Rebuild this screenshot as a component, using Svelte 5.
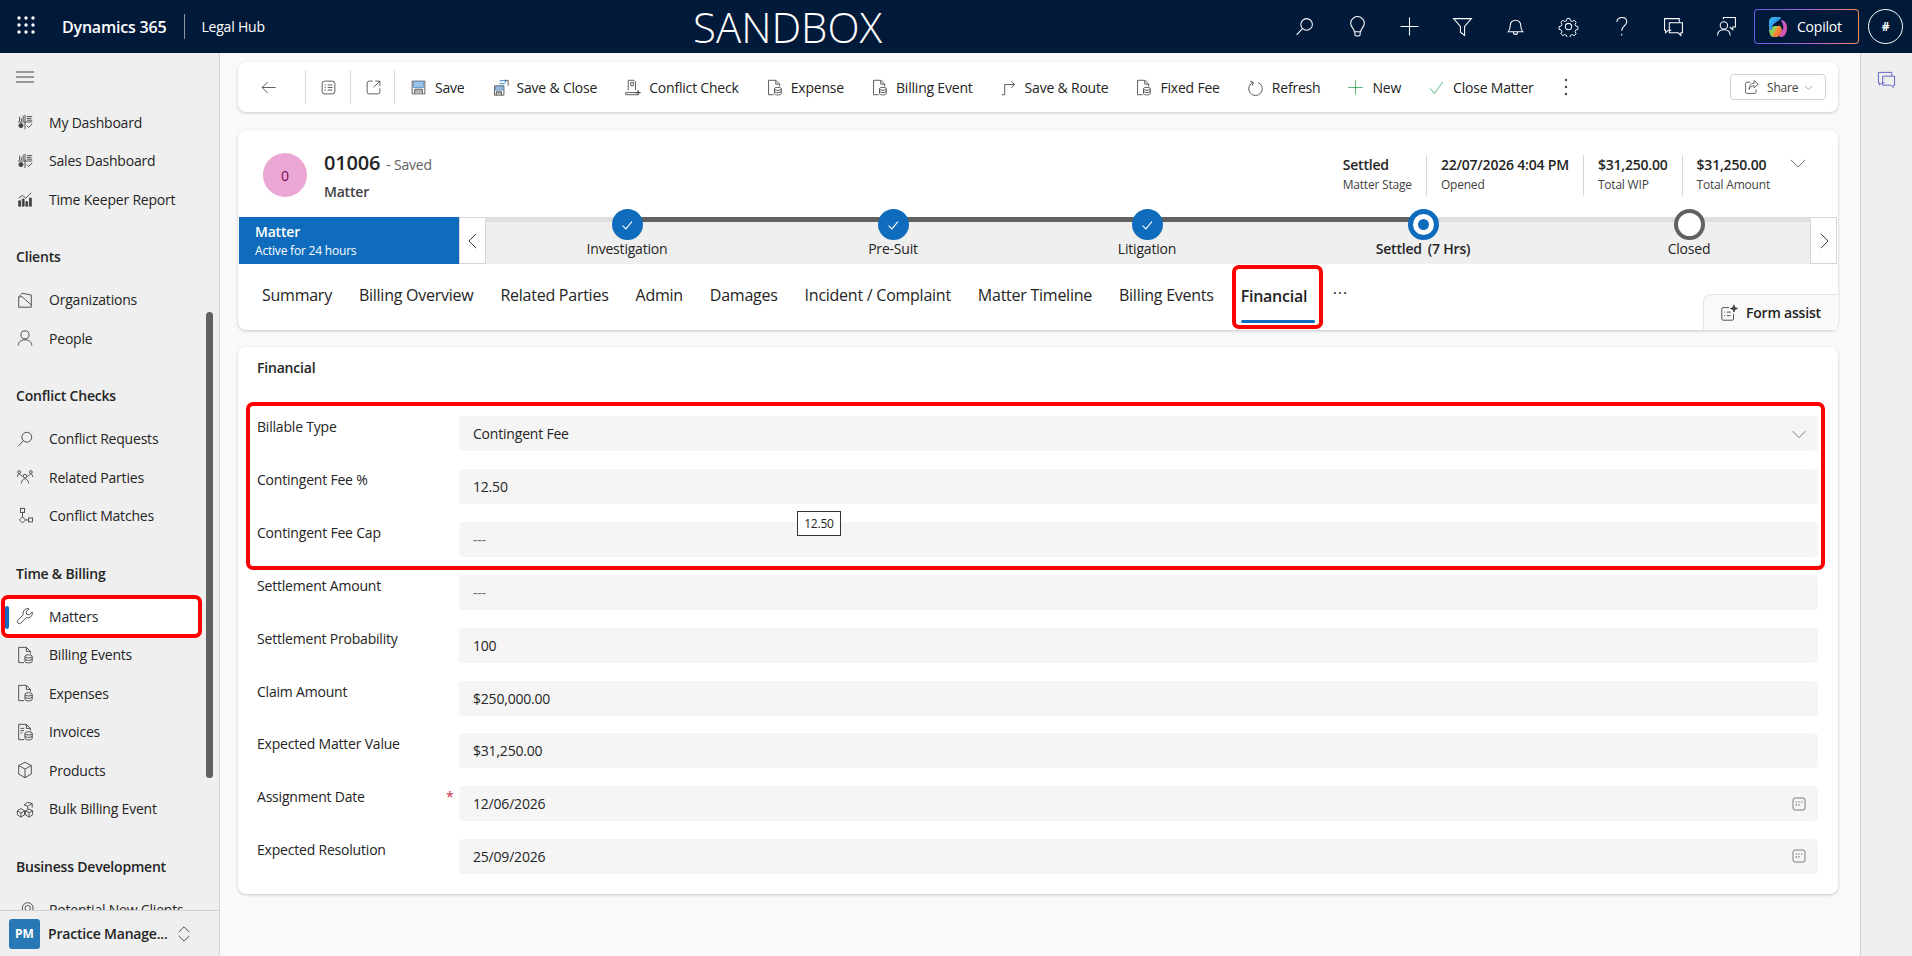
<script>
  const db = '<ellipse cx="14" cy="11.5" rx="4" ry="1.8"/><path d="M10 11.5v5.5c0 1 1.8 1.8 4 1.8s4-.8 4-1.8v-5.5M10 14.2c0 1 1.8 1.8 4 1.8s4-.8 4-1.8"/>';
  const icons = {
    dash: '<path d="M10 2v16M2 10h16M4 4v5M6 6v3M8 3v6M12 4h6M12 6h5M12 8h6M12 14l2 2 4-4"/><circle cx="5.5" cy="14" r="2.3" fill="currentColor"/>',
    report: '<path d="M3 18v-6h2v6zM7 18v-8h2v8zM11 18v-5h2v5zM15 18V9h2v9z" fill="currentColor"/><path d="M3 9l4-3 4 3 6-6"/>',
    org: '<path d="M3 6.5V18h14V4.5L7 2.5 3 6.5zM3 6.5h4l10 9"/>',
    person: '<circle cx="10" cy="6.5" r="4.5"/><path d="M2.5 18.5c0-4 3-6.5 7.5-6.5s7.5 2.5 7.5 6.5"/>',
    search: '<circle cx="12" cy="8" r="5.5"/><path d="M8 12l-5.5 6"/>',
    network: '<circle cx="10" cy="9" r="2"/><circle cx="3.5" cy="4.5" r="1.6"/><circle cx="16.5" cy="4.5" r="1.6"/><path d="M1.5 10c0-2 1-3.5 2-3.5l4 3M18.5 10c0-2-1-3.5-2-3.5l-4 3M6 17c0-3 2-5 4-5s4 2 4 5"/>',
    flow: '<rect x="5" y="1.5" width="4.5" height="4.5"/><path d="M7.2 6v5M7.2 11l3.4 3.4-3.4 3.4-3.4-3.4zM10.6 14.4H14"/><rect x="14" y="12.2" width="4.3" height="4.3"/>',
    wrench: '<path d="M18 5.5l-3.2 3.2-3-.6-.6-3L14.500 1.900a5.200 5.200 0 0 0-6.400 6.700L2.200 14.500a2.300 2.300 0 0 0 3.300 3.300l5.900-5.900a5.200 5.200 0 0 0 6.600-6.400z"/>',
    bill: '<path d="M9 18.500H3V1.500h8.500L16 6v2.500M11.500 1.500V6H16"/>' + db,
    invoice: '<path d="M9 18.500H3V1.500h8.500L16 6v2.500M11.500 1.500V6H16M5 6h4M5 8.500h4M5 11h2"/>' + db,
    cube: '<path d="M10 1.500l7 3.500v9.500l-7 4-7-4V5zM3 5l7 4 7-4M10 9v9.500"/>',
    cubes: '<path d="M9 5.500l4-3 5 1.500v4.500M9 5.500l4 1.500 5-3M13 7v3"/><path d="M1.500 12l4-2.500 4 2.500v4.500l-4 2.500-4-2.500zM1.500 12l4 2.500 4-2.500M5.500 14.500v4.500"/><path d="M10.500 12l4-2 4 2v4.500l-4 2.500-4-2.500zM14.500 14v5M10.500 12l4 2 4-2"/>',
    gearish: '<circle cx="13" cy="9" r="3"/><circle cx="13" cy="9" r="6"/><circle cx="4" cy="14" r="2.500"/>',
    back: '<path d="M18.500 10H2.500M9 3.500L2.500 10 9 16.500"/>',
    list: '<rect x="2.500" y="2.500" width="15" height="15" rx="3"/><path d="M9 7h5.500M9 10h5.500M9 13h5.500"/><path d="M5.500 7h1M5.500 10h1M5.500 13h1" stroke-width="1.500"/>',
    open: '<path d="M9 2.500H5A2.500 2.500 0 0 0 2.500 5v10A2.500 2.500 0 0 0 5 17.500h10a2.500 2.500 0 0 0 2.500-2.500v-4M12 2.500h5.500V8M17.500 2.500l-7.500 7.500"/>',
    save: '<path d="M2.500 2.500h15v15h-15z"/><path d="M4 3h12v7H4z" fill="#9cc3e6" stroke="#5b8fc0"/><path d="M5.500 17v-5h9v5" fill="#b5b5b5"/>',
    saveclose: '<path d="M3 8h11v11H3z"/><path d="M4 9h9v4H4z" fill="#9cc3e6" stroke="#5b8fc0"/><path d="M5 19v-4h6v4" fill="#b5b5b5"/><path d="M9 2h7v2M9 5.500h6M15 1l1.500 1.500L15 4" stroke="#1b6ec2"/><path d="M16 1.500h3V8" />',
    conflict: '<path d="M5 13V1.500h6.500l2 2V13M8 4h3v4H8zM2 16h12M2 16v2.500h14"/><path d="M16.500 13v6M13.500 16h6" stroke-width="1.300"/>',
    route: '<path d="M2 18.500h3.500V6.500H17M13.500 2.500l3.500 4-3.500 4"/>',
    refresh: '<path d="M7 4a8 8 0 1 0 6 0"/><path d="M3.500 2.500L7.500 4 6 8"/>',
    plus: '<path d="M10 1.500v17M1.500 10h17"/>',
    check: '<path d="M2.500 11l5 6 10-13.500"/>',
    share: '<path d="M8 4H3.500a1.500 1.500 0 0 0-1.500 1.500v11A1.500 1.500 0 0 0 3.500 18h10a1.500 1.500 0 0 0 1.500-1.500V13M12.500 2l5.500 4.500-5.500 4.500V8.500c-3 0-5 1.500-6 4.500 0-5 2-7.500 6-7.500z"/>',
    bulb: '<path d="M7 15c0-3-3.500-4-3.500-8a6.500 6.500 0 0 1 13 0c0 4-3.500 5-3.500 8zM7.500 15v2.500a1.500 1.500 0 0 0 1.500 1.500h2a1.500 1.500 0 0 0 1.500-1.500V15"/>',
    filter: '<path d="M1.500 2.500h17L12 10v8.500l-4-3V10z"/>',
    bell: '<path d="M3 15h14c-1.500-1.500-2-3-2-6a5 5 0 0 0-10 0c0 3-.5 4.500-2 6zM8 15.500a2 2 0 0 0 4 0"/>',
    gear: '<circle cx="10" cy="10" r="3"/><path d="M8.500 1.500h3l.6 2.400 1.800.8 2.200-1.300 2 2.100-1.200 2.200.8 1.800 2.300.6v3l-2.300.6-.8 1.800 1.200 2.200-2.100 2-2.100-1.200-1.800.8-.6 2.400h-3l-.6-2.400-1.800-.8-2.100 1.200-2.100-2 1.200-2.200-.8-1.800-2.300-.6v-3l2.300-.6.8-1.800-1.200-2.200 2.100-2 2.100 1.200 1.800-.8z" transform="translate(1 1) scale(.9)"/>',
    help: '<path d="M5.500 5.500C6 3 8 1.500 10.500 1.500c2.800 0 4.500 1.800 4.500 4 0 4-4.800 4-4.800 8.500M10.200 17v1.500"/>',
    chat: '<path d="M8 13.500H5l-2.500 2.500v-2.500H1.500V2.500h14V6"/><path d="M6 6.500h12.500v9.500H17v2.500L14.500 16H6z"/>',
    personchat: '<circle cx="7.500" cy="9" r="3.500"/><path d="M1.500 18.500c0-3.500 2.500-5.500 6-5.500s6 2 6 5.500M7 3V1.500h11.500v9H16V13l-3-2.500"/>',
    chevdown: '<path d="M2 6.500l8 8 8-8"/>',
    chevleft: '<path d="M13.500 2l-8 8 8 8"/>',
    chevright: '<path d="M6.500 2l8 8-8 8"/>',
    updown: '<path d="M4 8l6-6 6 6M4 12l6 6 6-6"/>',
    calendar: '<rect x="2.500" y="2.500" width="15" height="15" rx="2.500"/><path d="M6 7.500h1.500M9.300 7.500h1.500M12.600 7.500h1.500M6 11h1.500M9.300 11h1.500" stroke-width="1.500"/>',
    formassist: '<path d="M10 4H3.500A1.500 1.500 0 0 0 2 5.500v11A1.500 1.500 0 0 0 3.500 18h10a1.500 1.500 0 0 0 1.500-1.500V11M7.500 9H12M7.500 13H12M4.500 9h1M4.500 13h1"/><path d="M15.500 1l1 3 3 1-3 1-1 3-1-3-3-1 3-1z" fill="currentColor"/>'
  };

  const nav = [
    { items: [['dash', 'My Dashboard'], ['dash', 'Sales Dashboard'], ['report', 'Time Keeper Report']] },
    { title: 'Clients', items: [['org', 'Organizations'], ['person', 'People']] },
    { title: 'Conflict Checks', items: [['search', 'Conflict Requests'], ['network', 'Related Parties'], ['flow', 'Conflict Matches']] },
    { title: 'Time & Billing', items: [['wrench', 'Matters'], ['bill', 'Billing Events'], ['bill', 'Expenses'], ['invoice', 'Invoices'], ['cube', 'Products'], ['cubes', 'Bulk Billing Event']] },
    { title: 'Business Development', items: [['gearish', 'Potential New Clients']] }
  ];

  const commands = [
    ['save', 'Save'], ['saveclose', 'Save & Close'], ['conflict', 'Conflict Check'], ['bill', 'Expense'],
    ['bill', 'Billing Event'], ['route', 'Save & Route'], ['bill', 'Fixed Fee'], ['refresh', 'Refresh'],
    ['plus', 'New', 'green'], ['check', 'Close Matter', 'green']
  ];

  const topIcons = ['search', 'bulb', 'plus', 'filter', 'bell', 'gear', 'help', 'chat', 'personchat'];

  const stats = [
    ['Settled', 'Matter Stage'], ['22/07/2026 4:04 PM', 'Opened'], ['$31,250.00', 'Total WIP'], ['$31,250.00', 'Total Amount']
  ];

  const stages = [
    { name: 'Investigation', state: 'done' },
    { name: 'Pre-Suit', state: 'done' },
    { name: 'Litigation', state: 'done' },
    { name: 'Settled', extra: '(7 Hrs)', state: 'active' },
    { name: 'Closed', state: 'next' }
  ];

  const tabs = ['Summary', 'Billing Overview', 'Related Parties', 'Admin', 'Damages', 'Incident / Complaint', 'Matter Timeline', 'Billing Events'];

  const highlighted = [
    { label: 'Billable Type', value: 'Contingent Fee', icon: 'chevdown' },
    { label: 'Contingent Fee %', value: '12.50', tip: '12.50' },
    { label: 'Contingent Fee Cap', value: '---', empty: true }
  ];
  const fields = [
    { label: 'Settlement Amount', value: '---', empty: true },
    { label: 'Settlement Probability', value: '100' },
    { label: 'Claim Amount', value: '$250,000.00' },
    { label: 'Expected Matter Value', value: '$31,250.00' },
    { label: 'Assignment Date', value: '12/06/2026', icon: 'calendar', required: true },
    { label: 'Expected Resolution', value: '25/09/2026', icon: 'calendar' }
  ];
</script>

{#snippet icon(name, cls = '')}
  <svg class="ic {cls}" viewBox="0 0 20 20">{@html icons[name]}</svg>
{/snippet}

{#snippet field(f)}
  <div class="row">
    <div class="label">{f.label}{#if f.required}<span class="req">*</span>{/if}</div>
    <div class="input" class:empty={f.empty}>
      <span>{f.value}</span>
      {#if f.icon}{@render icon(f.icon, 'field-ic')}{/if}
      {#if f.tip}<div class="tip">{f.tip}</div>{/if}
    </div>
  </div>
{/snippet}

<div class="app">
  <header class="top">
    <div class="brand">
      <svg class="waffle" viewBox="0 0 18 18">
        {#each [2, 9, 16] as y}{#each [2, 9, 16] as x}<circle cx={x} cy={y} r="1.7" fill="#fff" />{/each}{/each}
      </svg>
      <span class="d365">Dynamics 365</span>
      <span class="app-name">Legal Hub</span>
    </div>
    <div class="sandbox">SANDBOX</div>
    <div class="top-right">
      {#each topIcons as t}
        <span class="top-btn">{@render icon(t, 'top-ic')}</span>
      {/each}
      <div class="copilot">
        <svg class="cp-logo" viewBox="0 0 20 22">
          <defs>
            <linearGradient id="cpa" x1="0" y1="0" x2="1" y2="1"><stop offset="0" stop-color="#35c1f1" /><stop offset="1" stop-color="#2f6fe0" /></linearGradient>
            <linearGradient id="cpb" x1="0" y1="0" x2="1" y2="1"><stop offset="0" stop-color="#b46be8" /><stop offset="1" stop-color="#e84d9c" /></linearGradient>
            <linearGradient id="cpc" x1="0" y1="0" x2="1" y2="1"><stop offset="0" stop-color="#ffb238" /><stop offset="1" stop-color="#f0603c" /></linearGradient>
          </defs>
          <path d="M6 1h6c1.500 0 1 2-1 3L7 7c-2 1-3 3-3 6 0 2-3 1-3-1V6c0-3 2-5 5-5z" fill="url(#cpa)" />
          <path d="M1 12c0 2 3 3 3 1 0-2 1-3 3-3h3L7 16c-1 2 0 5-2 5-2.500 0-4-4-4-9z" fill="#8ed05a" />
          <path d="M13 4c4 0 6 4 6 8s-2 9-6 9c-2 0-2-2-1-3l3-5c1-2 0-5-2-9z" fill="url(#cpb)" />
          <path d="M6 21c-2 0-2-2-1-3l4-7c1-2 3-1 4 0 1 2 1 4 0 6l-2 3c-.7 1-1.500 1-2 1z" fill="url(#cpc)" />
        </svg>
        <span>Copilot</span>
      </div>
      <div class="avatar">#</div>
    </div>
  </header>

  <div class="body">
    <aside class="side">
      <div class="burger"><svg viewBox="0 0 20 14" class="burger-ic"><path d="M1 2h18M1 7h18M1 12h18" /></svg></div>
      <nav class="nav">
        {#each nav as group}
          {#if group.title}<div class="nav-title">{group.title}</div>{/if}
          {#each group.items as it}
            <div class="nav-item" class:on={it[1] === 'Matters'}>
              {#if it[1] === 'Matters'}<i class="bar"></i>{/if}
              {@render icon(it[0], 'nav-ic')}
              <span>{it[1]}</span>
            </div>
          {/each}
        {/each}
      </nav>
      <div class="scroll"></div>
      <div class="area">
        <span class="pm">PM</span>
        <span class="area-name">Practice Manage...</span>
        {@render icon('updown', 'updown')}
      </div>
    </aside>

    <main class="main">
      <section class="card bar-card">
        <span class="tool-ic">{@render icon('back', 'cmd-ic')}</span>
        <span class="tool-ic sep">{@render icon('list', 'cmd-ic')}</span>
        <span class="tool-ic sep">{@render icon('open', 'cmd-ic')}</span>
        <i class="divider"></i>
        <div class="cmds">
          {#each commands as c}
            <div class="cmd">
              {@render icon(c[0], 'cmd-ic ' + (c[2] || ''))}
              <span>{c[1]}</span>
            </div>
          {/each}
        </div>
        <svg class="kebab" viewBox="0 0 4 20"><circle cx="2" cy="3" r="1.200" /><circle cx="2" cy="10" r="1.200" /><circle cx="2" cy="17" r="1.200" /></svg>
        <div class="share">
          {@render icon('share', 'share-ic')}
          <span>Share</span>
          {@render icon('chevdown', 'share-chev')}
        </div>
      </section>

      <section class="card head-card">
        <div class="title-row">
          <div class="entity">0</div>
          <div class="title-text">
            <div class="title"><b>01006</b><span class="saved">- Saved</span></div>
            <div class="subtitle">Matter</div>
          </div>
          <div class="stats">
            {#each stats as s}
              <div class="stat">
                <div class="stat-val">{s[0]}</div>
                <div class="stat-lab">{s[1]}</div>
              </div>
            {/each}
          </div>
          {@render icon('chevdown', 'head-chev')}
        </div>

        <div class="process">
          <div class="flag">
            <div class="flag-name">Matter</div>
            <div class="flag-sub">Active for 24 hours</div>
          </div>
          <div class="nav-box">{@render icon('chevleft', 'box-chev')}</div>
          <div class="stages">
            <i class="line"></i>
            {#each stages as s}
              <div class="stage">
                <div class="dot {s.state}">
                  {#if s.state === 'done'}<svg viewBox="0 0 20 20"><path d="M6 10.500l3 3 5.500-6.500" /></svg>{/if}
                </div>
                <div class="stage-name" class:bold={s.state === 'active'}>{s.name}{#if s.extra}<span class="extra">{s.extra}</span>{/if}</div>
              </div>
            {/each}
          </div>
          <div class="nav-box">{@render icon('chevright', 'box-chev')}</div>
        </div>

        <div class="tabs-row">
          <div class="tabs">
            {#each tabs as t}<div class="tab">{t}</div>{/each}
            <div class="tab active"><span>Financial</span></div>
            <div class="more">···</div>
          </div>
          <div class="assist">
            {@render icon('formassist', 'assist-ic')}
            <span>Form assist</span>
          </div>
        </div>
      </section>

      <section class="card form-card">
        <h2>Financial</h2>
        <div class="marked">
          {#each highlighted as f}{@render field(f)}{/each}
        </div>
        <div class="rest">
          {#each fields as f}{@render field(f)}{/each}
        </div>
      </section>
    </main>

    <aside class="rail">{@render icon('chat', 'rail-ic')}</aside>
  </div>
</div>

<style>
  :global(body) {
    margin: 0;
    overflow: hidden;
  }
  .app {
    width: 1912px;
    height: 956px;
    display: flex;
    flex-direction: column;
    font-family: "Open Sans", "Liberation Sans", sans-serif;
    font-size: 14px;
    letter-spacing: -0.2px;
    color: #242424;
    overflow: hidden;
  }
  .ic {
    fill: none;
    stroke: currentColor;
    stroke-width: 1;
    flex: none;
    display: block;
  }

  /* top bar */
  .top {
    height: 53px;
    flex: none;
    background: #021a3a;
    color: #fff;
    display: flex;
    align-items: center;
  }
  .brand {
    width: 693px;
    display: flex;
    align-items: center;
  }
  .waffle {
    width: 18px;
    height: 18px;
    margin: -3px 0 0 17px;
  }
  .d365 {
    margin-left: 27px;
    font-size: 16px;
    font-weight: 600;
  }
  .app-name {
    margin-left: 18px;
    padding-left: 17px;
    position: relative;
    font-size: 14px;
  }
  .app-name::before {
    content: "";
    position: absolute;
    left: 0;
    top: -3px;
    bottom: -3px;
    width: 1px;
    background: #8c95a3;
  }
  .sandbox {
    font-size: 42px;
    font-weight: 300;
    letter-spacing: 0;
    line-height: 53px;
    margin-top: -1px;
  }
  .top-right {
    margin-left: auto;
    display: flex;
    align-items: center;
  }
  .top-btn {
    width: 52.8px;
    display: flex;
    justify-content: center;
  }
  .top-ic {
    width: 21px;
    height: 21px;
  }
  .copilot {
    width: 105px;
    height: 35px;
    box-sizing: border-box;
    margin-left: 1px;
    display: flex;
    align-items: center;
    gap: 9px;
    padding-left: 13px;
    border-radius: 4px;
    border: 1px solid transparent;
    background: linear-gradient(#021a3a, #021a3a) padding-box, linear-gradient(90deg, #6a5ce0, #b268d8 60%, #e8905a) border-box;
    font-size: 14px;
  }
  .cp-logo {
    width: 20px;
    height: 22px;
  }
  .avatar {
    width: 35px;
    height: 35px;
    box-sizing: border-box;
    margin: 0 9px 0 9px;
    border: 1px solid #fff;
    border-radius: 50%;
    display: flex;
    align-items: center;
    justify-content: center;
    font-size: 12px;
    font-weight: 700;
  }

  .body {
    flex: 1;
    min-height: 0;
    display: flex;
  }

  /* sitemap */
  .side {
    width: 220px;
    box-sizing: border-box;
    flex: none;
    background: #efefef;
    border-right: 1px solid #d6d6d6;
    display: flex;
    flex-direction: column;
    position: relative;
  }
  .burger {
    height: 50px;
    flex: none;
    display: flex;
    align-items: center;
    padding-left: 15px;
    margin-bottom: 0;
  }
  .burger-ic {
    width: 20px;
    height: 14px;
    fill: none;
    stroke: #424242;
    stroke-width: 1;
    margin-top: -3px;
  }
  .nav {
    flex: 1;
    min-height: 0;
    overflow: hidden;
  }
  .nav-title {
    height: 38.5px;
    margin: 19px 0 4.5px;
    padding-left: 16px;
    display: flex;
    align-items: center;
    font-weight: 600;
  }
  .nav-item {
    height: 38.5px;
    box-sizing: border-box;
    display: flex;
    align-items: center;
    padding-left: 16px;
    gap: 15px;
    position: relative;
  }
  .nav-item.on {
    width: 201px;
    margin-left: 1px;
    padding-left: 11px;
    height: 43px;
    margin-top: -2.25px;
    margin-bottom: -2.25px;
    background: #fff;
    border: 4px solid #f00;
    border-radius: 7px;
    z-index: 1;
  }
  .bar {
    position: absolute;
    left: 0;
    top: 7px;
    width: 4px;
    height: 23px;
    background: #0f6cbd;
    border-radius: 2px;
  }
  .nav-ic {
    width: 18px;
    height: 18px;
    color: #424242;
  }
  .scroll {
    position: absolute;
    left: 206px;
    top: 259px;
    width: 7px;
    height: 466px;
    background: #616161;
    border-radius: 4px;
  }
  .area {
    height: 46px;
    flex: none;
    box-sizing: border-box;
    border-top: 1px solid #d1d1d1;
    background: #efefef;
    display: flex;
    align-items: center;
    padding-left: 9px;
    position: relative;
  }
  .pm {
    width: 31px;
    height: 30px;
    border-radius: 3px;
    background: #2878b5;
    color: #fff;
    font-size: 12px;
    font-weight: 700;
    display: flex;
    align-items: center;
    justify-content: center;
    letter-spacing: 0;
  }
  .area-name {
    margin-left: 8px;
    font-size: 14px;
    font-weight: 600;
  }
  .updown {
    width: 18px;
    height: 18px;
    margin-left: 7px;
    color: #424242;
  }

  /* main */
  .main {
    flex: 1;
    min-width: 0;
    background: #f9f9f9;
    padding: 9px 22px 0 18px;
    display: flex;
    flex-direction: column;
    gap: 18px;
  }
  .card {
    background: #fff;
    border-radius: 8px;
    box-shadow: 0 1px 3px rgba(0, 0, 0, 0.2);
  }
  .bar-card {
    height: 50px;
    flex: none;
    display: flex;
    align-items: center;
    padding-left: 22px;
  }
  .tool-ic {
    width: 45px;
    height: 34px;
    display: flex;
    align-items: center;
    box-sizing: border-box;
    padding-left: 0;
  }
  .tool-ic.sep {
    border-left: 1px solid #d8d8d8;
    padding-left: 14px;
  }
  .divider {
    width: 1px;
    height: 34px;
    background: #d8d8d8;
    margin-left: -1px;
  }
  .cmds {
    display: flex;
    gap: 27px;
    margin-left: 15px;
  }
  .cmd {
    display: flex;
    align-items: center;
    gap: 8px;
  }
  .cmd-ic {
    width: 17px;
    height: 17px;
    color: #424242;
  }
  .cmd-ic.green {
    color: #3fa85c;
  }
  .kebab {
    width: 4px;
    height: 20px;
    margin-left: 30px;
    fill: #424242;
  }
  .share {
    margin-left: auto;
    margin-right: 12px;
    width: 96px;
    height: 26px;
    box-sizing: border-box;
    border: 1px solid #d1d1d1;
    border-radius: 4px;
    display: flex;
    align-items: center;
    padding-left: 13px;
    font-size: 12px;
    color: #424242;
  }
  .share-ic {
    width: 16px;
    height: 16px;
    margin-right: 7px;
  }
  .share-chev {
    width: 9px;
    height: 9px;
    margin-left: 6px;
  }

  .head-card {
    height: 200px;
    flex: none;
    display: flex;
    flex-direction: column;
  }
  .title-row {
    height: 87px;
    flex: none;
    display: flex;
    align-items: center;
    position: relative;
  }
  .entity {
    width: 44px;
    height: 44px;
    margin: 3px 0 0 25px;
    border-radius: 50%;
    background: #eba7d3;
    color: #7d0f55;
    display: flex;
    align-items: center;
    justify-content: center;
  }
  .title-text {
    margin-left: 17px;
    padding-top: 3px;
  }
  .title b {
    font-size: 20px;
    font-weight: 600;
    line-height: 28px;
  }
  .saved {
    margin-left: 6px;
    color: #616161;
  }
  .subtitle {
    margin-top: 6px;
    font-weight: 600;
    font-size: 14px;
    color: #424242;
    line-height: 18px;
  }
  .stats {
    margin-left: auto;
    margin-right: 54px;
    display: flex;
    margin-top: 3px;
  }
  .stat {
    padding: 0 14px;
    height: 41px;
    border-left: 1px solid #d8d8d8;
  }
  .stat:first-child {
    border-left: 0;
  }
  .stat-val {
    font-weight: 600;
    line-height: 20px;
  }
  .stat-lab {
    font-size: 12px;
    color: #424242;
    line-height: 20px;
  }
  .head-chev {
    position: absolute;
    right: 31px;
    top: 24px;
    width: 18px;
    height: 18px;
    color: #616161;
  }

  .process {
    height: 47px;
    flex: none;
    display: flex;
    margin-left: 1px;
    margin-right: 1px;
  }
  .flag {
    width: 220px;
    flex: none;
    box-sizing: border-box;
    background: #0f6cbd;
    color: #fff;
    padding: 5px 16px;
  }
  .flag-name {
    font-weight: 600;
    line-height: 20px;
  }
  .flag-sub {
    font-size: 12px;
    line-height: 18px;
  }
  .nav-box {
    width: 27px;
    flex: none;
    box-sizing: border-box;
    border: 1px solid #d6d6d6;
    display: flex;
    align-items: center;
    justify-content: center;
    background: #fff;
  }
  .box-chev {
    width: 18px;
    height: 18px;
  }
  .stages {
    flex: 1;
    min-width: 0;
    background: #efefef;
    border-top: 5px solid #e0e0e0;
    box-sizing: border-box;
    display: grid;
    grid-template-columns: 282px 250px 258px 294px 238px;
    position: relative;
  }
  .line {
    position: absolute;
    left: 141px;
    width: 796px;
    top: -5px;
    height: 5px;
    background: #616161;
  }
  .stage {
    position: relative;
    display: flex;
    flex-direction: column;
    align-items: center;
  }
  .dot {
    width: 31px;
    height: 31px;
    box-sizing: border-box;
    border-radius: 50%;
    margin-top: -13px;
    position: relative;
    display: flex;
    align-items: center;
    justify-content: center;
  }
  .dot.done {
    background: #0f6cbd;
  }
  .dot svg {
    width: 22px;
    height: 22px;
    fill: none;
    stroke: #fff;
    stroke-width: 1;
  }
  .dot.active {
    background: #fff;
    border: 5px solid #0f6cbd;
  }
  .dot.active::after {
    content: "";
    width: 11px;
    height: 11px;
    border-radius: 50%;
    background: #0f6cbd;
  }
  .dot.next {
    background: #fff;
    border: 4px solid #616161;
  }
  .stage-name {
    line-height: 18px;
    margin-top: 0;
    white-space: nowrap;
  }
  .stage-name.bold {
    font-weight: 600;
  }
  .extra {
    margin-left: 6px;
  }

  .tabs-row {
    flex: 1;
    min-height: 0;
    display: flex;
    position: relative;
  }
  .tabs {
    display: flex;
    padding-left: 24px;
    gap: 27px;
    font-size: 16px;
    letter-spacing: -0.25px;
  }
  .tab {
    line-height: 62px;
    white-space: nowrap;
    color: #242424;
  }
  .tab.active {
    font-weight: 600;
    box-sizing: border-box;
    width: 91px;
    height: 64px;
    margin: 1px 0 0 -9px;
    padding: 0 5px;
    line-height: 54px;
    border: 4px solid #f00;
    border-radius: 7px;
    position: relative;
  }
  .tab.active::after {
    content: "";
    position: absolute;
    left: 5px;
    right: 4px;
    top: 51px;
    height: 3px;
    background: #0f6cbd;
    border-radius: 2px;
  }
  .more {
    margin-left: -17px;
    line-height: 58px;
    font-size: 16px;
    letter-spacing: 1px;
  }
  .assist {
    position: absolute;
    right: 1px;
    bottom: 0;
    width: 134px;
    height: 36px;
    box-sizing: border-box;
    background: #f9f9f9;
    border: 1px solid #e6e6e6;
    border-width: 1px 0 0 1px;
    border-radius: 8px 0 0 0;
    display: flex;
    align-items: center;
    padding-left: 16px;
    gap: 8px;
    font-weight: 600;
  }
  .assist-ic {
    width: 18px;
    height: 18px;
    color: #424242;
  }

  /* form */
  .form-card {
    height: 547px;
    flex: none;
    box-sizing: border-box;
    margin-top: -1px;
    padding: 0 20px 0 19px;
    position: relative;
  }
  h2 {
    margin: 0;
    font-size: 14px;
    font-weight: 600;
    line-height: 20px;
    padding-top: 11px;
    height: 55px;
    box-sizing: border-box;
  }
  .marked {
    margin: 0 -7px 0 -11px;
    padding: 10px 3px 9px 7px;
    border: 4px solid #f00;
    border-radius: 7px;
    display: flex;
    flex-direction: column;
    gap: 17.750px;
    height: 168px;
    box-sizing: border-box;
  }
  .rest {
    margin-top: 5px;
    display: flex;
    flex-direction: column;
    gap: 17.750px;
  }
  .row {
    display: grid;
    grid-template-columns: 202px 1fr;
    height: 35px;
  }
  .label {
    line-height: 20px;
    position: relative;
    color: #242424;
    top: 1px;
  }
  .req {
    position: absolute;
    left: 189px;
    top: 0;
    color: #c4314b;
  }
  .input {
    background: #f5f5f5;
    border-radius: 4px;
    display: flex;
    align-items: center;
    justify-content: space-between;
    padding: 0 11px 0 14px;
    position: relative;
  }
  .input.empty {
    color: #707070;
  }
  .field-ic {
    width: 16px;
    height: 16px;
    color: #616161;
  }
  .tip {
    position: absolute;
    left: 338px;
    top: 42px;
    width: 44px;
    height: 25px;
    box-sizing: border-box;
    background: #fff;
    border: 1px solid #333;
    font-size: 12px;
    display: flex;
    align-items: center;
    justify-content: center;
    z-index: 2;
    color: #242424;
  }

  .rail {
    width: 52px;
    flex: none;
    box-sizing: border-box;
    background: #efefef;
    border-left: 1px solid #d1d1d1;
    display: flex;
    justify-content: center;
    padding-top: 17px;
  }
  .rail-ic {
    width: 19px;
    height: 19px;
    color: #5b5fc7;
  }
</style>
